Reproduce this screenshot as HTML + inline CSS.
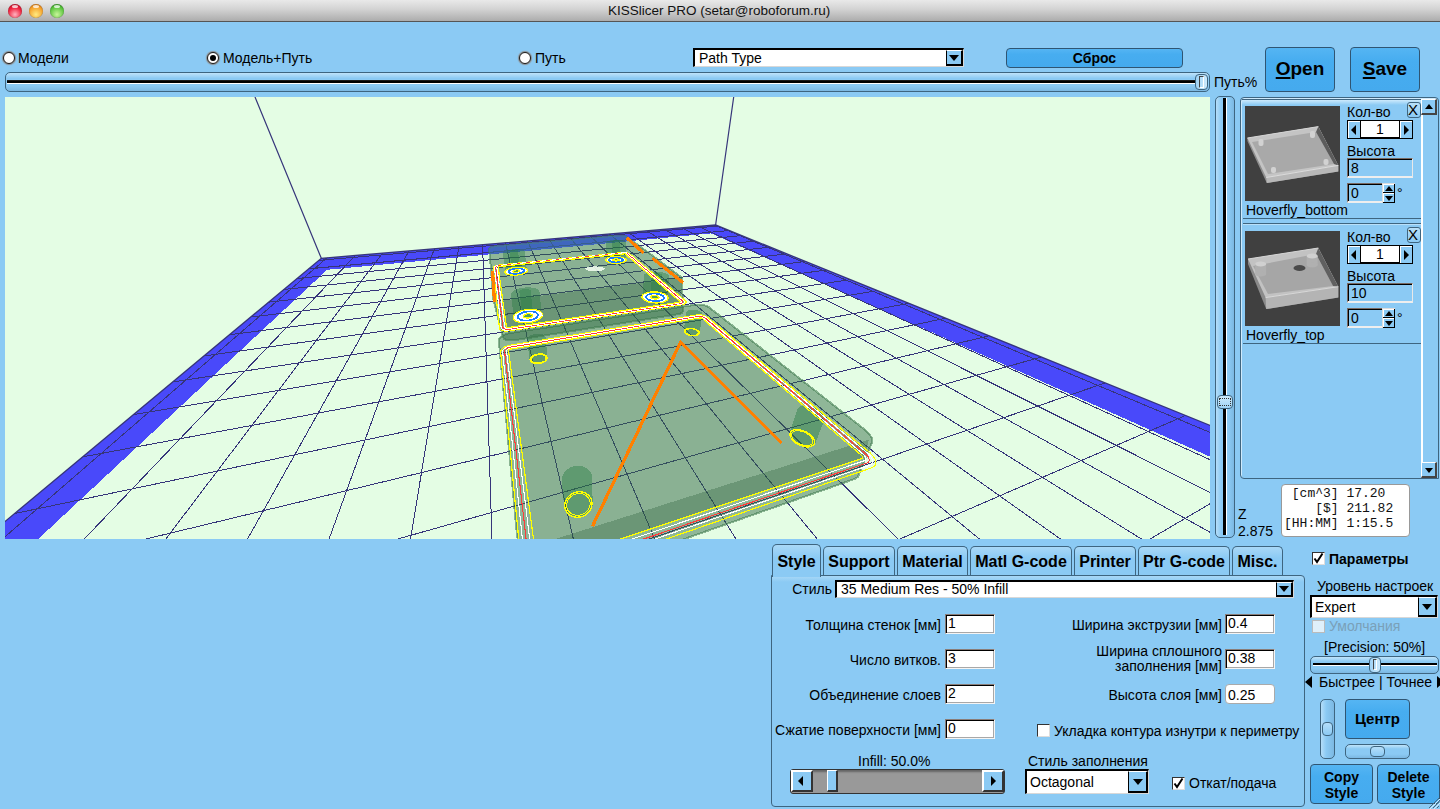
<!DOCTYPE html>
<html><head><meta charset="utf-8">
<style>
*{box-sizing:border-box;margin:0;padding:0}
html,body{width:1440px;height:809px;overflow:hidden}
body{background:#8bcaf4;font-family:"Liberation Sans",sans-serif;color:#000;position:relative;font-size:14px}
.a{position:absolute}
.t{position:absolute;white-space:nowrap;line-height:1}
#title{left:0;top:0;width:1440px;height:22px;background:linear-gradient(#e9e9e9,#d2d2d2 45%,#acacac);border-bottom:1px solid #555}
.tl{position:absolute;top:4px;width:14px;height:14px;border-radius:50%;box-shadow:inset 0 0 1px rgba(0,0,0,.5)}
.btn{position:absolute;background:linear-gradient(#55b5f3,#47adf0 30%,#45aaee);border:1px solid #2f5573;border-radius:4px;font-weight:bold;text-align:center}
.inp{position:absolute;background:#fff;border-top:1px solid #8a7d78;border-left:1px solid #8a7d78;border-right:1px solid #f4f4f4;border-bottom:1px solid #f4f4f4;box-shadow:inset 1px 1px 0 #000,inset -1px -1px 0 #a8a8a8}
.sel{position:absolute;background:#fff;border-top:2px solid #000;border-left:2px solid #000;border-right:1px solid #d8d8d8;border-bottom:1px solid #d8d8d8}
.dd{position:absolute;top:0;bottom:0;right:0;background:#8bcaf4;border-left:1px solid #000;border-bottom:2px solid #000;border-right:2px solid #000;border-top:1px solid #fff}
.dd:after{content:"";position:absolute;left:50%;top:50%;margin-left:-5px;margin-top:-3px;border-left:5px solid transparent;border-right:5px solid transparent;border-top:6px solid #000}
.slider{position:absolute;border:1px solid #3e6580;border-radius:5px;background:linear-gradient(#bfe3fa,#8bcaf4 30%,#8bcaf4 70%,#7cb8e2)}
.cb{position:absolute;width:13px;height:13px;background:#fff;border-top:1px solid #333;border-left:1px solid #333;border-right:1px solid #ddd;border-bottom:1px solid #ddd}
.tab{position:absolute;top:546px;height:29px;border:1px solid #3e6580;border-bottom:none;border-radius:5px 5px 0 0;background:linear-gradient(#a9d8f7,#8bcaf4 40%);font-weight:bold;font-size:16px;text-align:center;line-height:29px}
.lbl{position:absolute;white-space:nowrap;line-height:1;font-size:14px}
.r{text-align:right}
</style></head><body>
<div id="title" class="a">
  <div class="tl" style="left:8px;background:radial-gradient(circle at 50% 75%,#ffb3c0,#f0243f 55%,#a8081d)"></div>
  <div class="tl" style="left:29px;background:radial-gradient(circle at 50% 75%,#ffea80,#f5a12a 60%,#b85a08)"></div>
  <div class="tl" style="left:50px;background:radial-gradient(circle at 50% 75%,#c8f59a,#5cc63f 60%,#1f7a14)"></div>
  <div class="a" style="left:12px;top:5px;width:6px;height:3px;border-radius:50%;background:rgba(255,255,255,.75)"></div>
  <div class="a" style="left:33px;top:5px;width:6px;height:3px;border-radius:50%;background:rgba(255,255,255,.75)"></div>
  <div class="a" style="left:54px;top:5px;width:6px;height:3px;border-radius:50%;background:rgba(255,255,255,.75)"></div>
  <div class="t" style="left:608px;top:4px;font-size:13.5px;color:#111">KISSlicer PRO (setar@roboforum.ru)</div>
</div>
<svg class="a" style="left:5px;top:97px" width="1205" height="442" viewBox="5 97 1205 442" shape-rendering="crispEdges">
<rect x="5" y="97" width="1205" height="442" fill="#e4fde4"/>
<defs><clipPath id="fl"><polygon points="321.3,258.3 715.6,225.0 1400.0,502.4 1400.0,900.0 -200.0,900.0 -200.0,692.1"/></clipPath><clipPath id="bandclip"><path clip-rule="evenodd" d="M321.3,258.3 715.6,225.0 1400.0,502.4 1400.0,900.0 -200.0,900.0 -200.0,692.1Z M327.1,269.8 711.2,233.4 1400.0,541.8 1400.0,900.0 -349.0,900.0Z"/></clipPath></defs>
<path fill="#4949fa" fill-rule="evenodd" d="M321.3,258.3 715.6,225.0 1400.0,502.4 1400.0,900.0 -200.0,900.0 -200.0,692.1Z M327.1,269.8 711.2,233.4 1400.0,541.8 1400.0,900.0 -349.0,900.0Z"/>
<path clip-path="url(#fl)" d="M329.9,255.3L-1937.5,2219.7 M357.7,253.0L-1715.6,2421.3 M384.4,250.7L-1428.1,2641.2 M410.3,248.6L-1056.5,2865.6 M435.2,246.5L-588.0,3066.6 M459.2,244.5L-30.1,3204.3 M482.5,242.6L578.4,3241.0 M505.0,240.7L1175.2,3164.9 M526.8,238.9L1703.1,2998.6 M547.8,237.1L2134.4,2783.2 M568.3,235.4L2470.3,2555.3 M588.0,233.8L2726.6,2337.7 M607.2,232.2L2922.0,2140.5 M625.8,230.6L3072.5,1966.7 M643.9,229.1L3190.3,1815.2 M661.4,227.7L3284.4,1683.7 M678.4,226.2L3361.0,1569.3 M695.0,224.9L3424.6,1469.5 M711.0,223.5L3478.3,1382.0 M263.5,265.1L748.6,223.4 M249.4,274.2L760.7,227.7 M233.3,284.6L773.8,232.5 M214.8,296.5L788.3,237.7 M193.2,310.4L804.2,243.4 M167.8,326.8L821.9,249.7 M137.5,346.4L841.6,256.8 M100.6,370.2L863.7,264.8 M54.8,399.7L888.7,273.8 M-3.8,437.5L917.1,284.0 M-81.0,487.3L949.8,295.7 M-187.7,556.0L987.7,309.4 M-344.5,657.2L1032.3,325.4 M-598.1,820.7L1085.4,344.5 M-1077.1,1129.6L1149.8,367.7 M-2324.1,1933.7L1229.6,396.4 M-13636.7,9228.4L1330.8,432.8" stroke="#36357a" stroke-width="1" fill="none" shape-rendering="crispEdges"/>
<polyline points="-200.0,692.1 321.3,258.3 715.6,225.0 1400.0,502.4" stroke="#36357a" stroke-width="1.3" fill="none" shape-rendering="auto"/>
<path d="M255,97L321.3,258.3M733.7,97L715.6,225" stroke="#36357a" stroke-width="1.2" fill="none" shape-rendering="auto"/>
<polygon points="498.8,340.5 499.2,338.6 500.8,336.8 503.2,335.1 506.3,333.9 509.9,333.1 695.7,304.7 698.5,304.5 701.6,304.7 704.6,305.3 707.3,306.3 709.3,307.5 865.1,429.9 869.2,433.8 871.7,437.8 872.4,441.4 859.2,473.8 857.8,476.9 854.6,479.0 552.3,585.5 545.5,586.7 539.0,585.5 533.6,582.0 529.8,576.8 518.9,542.9 517.1,536.5" fill="#2f6842" fill-opacity="0.47" stroke="#3f7a4e" stroke-width="2" stroke-opacity="0.55" stroke-linejoin="round"/>
<polygon points="699.7,318.0 700.3,318.0 700.9,318.0 701.5,318.1 702.0,318.3 702.4,318.6 861.2,455.1 862.0,456.0 862.4,456.8 862.6,457.6 862.3,458.2 861.7,458.5 541.6,565.5 540.2,565.8 538.9,565.5 537.8,564.8 537.0,563.8 536.6,562.5 508.5,350.7 508.6,350.3 508.9,349.9 509.3,349.6 509.9,349.3 510.6,349.1" fill="#5a645a" fill-opacity="0.07"/>
<polygon points="533.7,545.9 868.8,439.6 864.2,457.7 537.2,567.0" fill="#285a37" fill-opacity="0.31"/>
<polygon points="561.7,480.3 561.8,478.0 562.5,475.7 563.5,473.6 565.0,471.6 566.7,469.8 568.8,468.4 571.1,467.2 573.5,466.3 576.0,465.9 578.6,465.8 581.1,466.0 583.5,466.6 585.7,467.6 587.6,468.9 589.3,470.5 590.6,472.4 591.5,474.4 592.0,476.6 592.7,502.3 592.7,504.6 592.3,506.9 591.5,509.2 590.2,511.4 588.6,513.3 586.6,515.0 584.3,516.3 581.9,517.3 579.3,517.9 576.7,518.0 574.2,517.7 571.8,517.0 569.6,515.8 567.7,514.3 566.2,512.5 565.0,510.5 564.3,508.3 564.0,506.0" fill="#237a40" fill-opacity="0.42"/>
<polygon points="789.2,434.6 789.3,433.2 797.3,409.5 797.8,408.3 798.7,407.3 799.9,406.6 801.4,406.0 803.2,405.7 805.3,405.6 807.5,405.8 809.8,406.2 812.1,406.9 814.4,407.7 816.6,408.8 818.7,410.1 820.6,411.4 822.1,412.9 823.4,414.4 824.2,416.0 824.7,417.5 824.8,418.9 824.4,420.1 814.9,444.2 814.1,445.4 812.9,446.3 811.4,446.9 809.5,447.3 807.5,447.4 805.2,447.2 802.9,446.7 800.6,445.9 798.3,444.9 796.1,443.7 794.2,442.3 792.5,440.8 791.1,439.2 790.1,437.7 789.5,436.1" fill="#237a40" fill-opacity="0.42"/>
<polygon points="527.1,339.1 527.3,338.2 527.8,337.4 528.6,336.6 529.6,335.9 530.8,335.2 532.1,334.7 533.6,334.3 535.1,333.9 536.7,333.8 538.3,333.7 539.8,333.8 541.2,334.1 542.5,334.4 543.6,334.9 544.5,335.5 545.1,336.2 545.5,336.9 545.6,337.8 547.5,357.9 547.4,358.8 546.9,359.7 546.2,360.6 545.3,361.4 544.2,362.1 542.9,362.7 541.4,363.2 539.9,363.6 538.3,363.8 536.7,363.8 535.2,363.7 533.7,363.4 532.5,363.0 531.4,362.5 530.6,361.8 530.0,361.0 529.7,360.2 527.1,339.9" fill="#237a40" fill-opacity="0.42"/>
<polygon points="683.8,331.2 686.0,312.6 686.2,312.0 686.6,311.4 687.2,310.9 688.0,310.5 689.0,310.2 690.2,309.9 691.5,309.8 692.8,309.8 694.2,309.9 695.6,310.0 697.0,310.3 698.3,310.7 699.4,311.2 700.4,311.7 701.3,312.3 701.9,312.9 702.3,313.6 702.4,314.2 699.7,332.8 699.6,333.5 699.2,334.1 698.7,334.7 697.9,335.2 696.9,335.6 695.7,335.9 694.4,336.0 693.1,336.1 691.6,336.0 690.2,335.8 688.9,335.4 687.6,335.0 686.5,334.5 685.5,333.9 684.8,333.2 684.2,332.6 683.9,331.9" fill="#237a40" fill-opacity="0.42"/>
<polygon points="489.2,248.9 489.5,248.2 490.6,247.5 492.2,246.9 494.2,246.4 496.5,246.2 618.6,235.6 620.6,235.5 622.6,235.6 624.5,235.8 626.0,236.2 627.0,236.7 681.2,277.1 682.1,278.1 682.2,279.2 682.9,311.6 682.1,312.8 680.5,313.6 678.3,314.2 513.9,340.3 510.7,340.5 507.7,340.3 505.3,339.5 503.6,338.4 503.0,336.9 493.6,300.9" fill="#2f6842" fill-opacity="0.47" stroke="#3f7a4e" stroke-width="2" stroke-opacity="0.55" stroke-linejoin="round"/>
<polygon clip-path="url(#bandclip)" points="489.2,248.9 489.5,248.2 490.6,247.5 492.2,246.9 494.2,246.4 496.5,246.2 618.6,235.6 620.6,235.5 622.6,235.6 624.5,235.8 626.0,236.2 627.0,236.7 681.2,277.1 682.1,278.1 682.2,279.2 682.9,311.6 682.1,312.8 680.5,313.6 678.3,314.2 513.9,340.3 510.7,340.5 507.7,340.3 505.3,339.5 503.6,338.4 503.0,336.9 493.6,300.9" fill="#4a8aff" fill-opacity="0.3"/>
<polygon points="623.9,253.9 624.3,253.8 624.7,253.9 625.1,253.9 625.3,254.0 625.5,254.1 679.7,301.3 679.9,301.5 679.9,301.8 679.8,302.0 679.4,302.2 679.0,302.3 508.6,327.5 508.0,327.6 507.4,327.5 506.9,327.4 506.6,327.2 506.4,326.9 498.2,267.2 498.2,267.0 498.4,266.9 498.7,266.7 499.1,266.6 499.6,266.5" fill="#5a645a" fill-opacity="0.07"/>
<polygon points="502.4,300.7 681.7,277.8 680.6,302.0 506.5,327.9" fill="#285a37" fill-opacity="0.3"/>
<polygon points="502.9,253.6 503.0,253.0 503.4,252.4 504.1,251.8 505.1,251.3 506.4,250.8 507.9,250.3 509.5,250.0 511.3,249.7 513.1,249.4 515.0,249.3 516.8,249.3 518.6,249.4 520.2,249.5 521.6,249.8 522.8,250.1 523.8,250.5 524.5,251.0 524.8,251.5 526.9,269.9 527.0,270.5 526.7,271.2 526.1,271.8 525.2,272.5 524.0,273.1 522.6,273.6 521.0,274.1 519.2,274.4 517.3,274.7 515.4,274.8 513.5,274.9 511.7,274.8 510.1,274.6 508.6,274.3 507.4,273.9 506.5,273.4 505.9,272.8 505.6,272.2" fill="#237a40" fill-opacity="0.38"/>
<polygon points="509.5,251.5 509.5,251.3 509.7,251.1 509.9,250.8 510.3,250.6 510.8,250.4 511.4,250.2 512.0,250.1 512.7,250.0 513.5,249.9 514.2,249.8 514.9,249.8 515.6,249.9 516.2,249.9 516.8,250.0 517.3,250.2 517.7,250.3 517.9,250.5 518.0,250.7 520.5,270.6 520.5,270.9 520.4,271.1 520.1,271.4 519.8,271.6 519.3,271.8 518.7,272.0 518.1,272.2 517.4,272.3 516.7,272.4 516.0,272.5 515.3,272.5 514.6,272.5 513.9,272.4 513.4,272.3 512.9,272.1 512.5,271.9 512.3,271.7 512.2,271.5" fill="#237a40" fill-opacity="0.35"/>
<polygon points="606.3,242.5 606.6,242.0 607.1,241.5 607.9,241.1 608.9,240.7 610.1,240.4 611.5,240.1 613.0,239.9 614.7,239.8 616.3,239.8 618.0,239.9 619.6,240.0 621.1,240.2 622.5,240.5 623.7,240.9 624.6,241.3 625.4,241.7 625.8,242.2 626.0,242.7 625.5,260.0 625.4,260.5 624.9,261.1 624.2,261.6 623.2,262.0 622.0,262.4 620.6,262.7 619.1,262.9 617.4,263.1 615.7,263.1 614.0,263.0 612.4,262.9 610.9,262.6 609.5,262.2 608.3,261.8 607.4,261.3 606.8,260.8 606.4,260.3 606.3,259.7" fill="#237a40" fill-opacity="0.38"/>
<polygon points="612.2,259.8 612.3,241.2 612.4,241.0 612.6,240.8 612.9,240.7 613.3,240.5 613.8,240.4 614.3,240.3 614.9,240.2 615.6,240.2 616.2,240.2 616.9,240.2 617.5,240.2 618.1,240.3 618.7,240.4 619.1,240.6 619.5,240.7 619.8,240.9 619.9,241.1 620.0,241.3 619.6,259.9 619.6,260.1 619.4,260.3 619.1,260.5 618.7,260.7 618.3,260.8 617.7,260.9 617.1,261.0 616.5,261.1 615.8,261.1 615.2,261.1 614.6,261.0 614.0,260.9 613.5,260.8 613.0,260.6 612.6,260.4 612.4,260.2 612.2,260.0" fill="#237a40" fill-opacity="0.35"/>
<polygon points="642.7,297.0 643.9,275.9 643.9,275.1 644.4,274.4 645.2,273.7 646.4,273.1 647.8,272.5 649.5,272.1 651.4,271.8 653.4,271.6 655.5,271.6 657.7,271.7 659.8,271.9 661.9,272.3 663.8,272.7 665.4,273.3 666.9,274.0 668.0,274.7 668.8,275.5 669.2,276.3 669.3,277.1 667.4,298.3 667.0,299.2 666.3,300.1 665.3,300.8 663.9,301.4 662.2,302.0 660.3,302.3 658.2,302.5 656.0,302.6 653.8,302.5 651.6,302.2 649.5,301.8 647.7,301.2 646.0,300.5 644.7,299.7 643.7,298.8 643.0,297.9" fill="#237a40" fill-opacity="0.38"/>
<polygon points="650.2,297.2 650.2,296.8 651.7,274.1 651.9,273.8 652.2,273.5 652.6,273.3 653.2,273.1 653.9,272.9 654.6,272.8 655.4,272.7 656.3,272.7 657.1,272.7 658.0,272.8 658.8,273.0 659.5,273.2 660.2,273.4 660.7,273.6 661.1,273.9 661.5,274.2 661.6,274.6 661.6,274.9 659.8,297.7 659.7,298.0 659.4,298.3 659.0,298.6 658.4,298.9 657.8,299.0 657.0,299.2 656.2,299.3 655.4,299.3 654.5,299.2 653.7,299.1 652.9,299.0 652.2,298.7 651.6,298.5 651.0,298.2 650.6,297.9 650.4,297.5" fill="#237a40" fill-opacity="0.35"/>
<polygon points="510.8,294.8 510.8,293.8 511.3,292.8 512.2,291.8 513.4,290.8 515.0,289.9 517.0,289.2 519.1,288.5 521.4,288.0 523.8,287.6 526.2,287.4 528.6,287.4 530.9,287.5 533.0,287.8 535.0,288.2 536.6,288.8 537.9,289.5 538.9,290.3 539.4,291.2 539.6,292.2 541.8,315.0 541.5,316.1 540.8,317.2 539.7,318.3 538.2,319.3 536.5,320.3 534.4,321.1 532.0,321.7 529.6,322.2 527.1,322.4 524.6,322.5 522.2,322.3 520.1,322.0 518.1,321.4 516.5,320.7 515.3,319.9 514.4,318.9 514.0,317.8" fill="#237a40" fill-opacity="0.38"/>
<polygon points="519.4,291.5 519.6,291.1 519.9,290.7 520.4,290.4 521.0,290.0 521.8,289.7 522.6,289.4 523.5,289.2 524.5,289.1 525.4,289.0 526.4,289.0 527.3,289.0 528.1,289.2 528.9,289.3 529.5,289.6 530.0,289.8 530.4,290.2 530.6,290.5 533.3,315.1 533.4,315.5 533.2,316.0 533.0,316.4 532.5,316.8 531.9,317.2 531.2,317.6 530.4,317.9 529.5,318.1 528.6,318.3 527.6,318.4 526.7,318.4 525.8,318.3 525.0,318.2 524.2,318.0 523.6,317.7 523.1,317.4 522.8,317.0 522.6,316.6 519.4,291.9" fill="#237a40" fill-opacity="0.35"/>
<polygon points="622.4,252.6 624.1,252.5 625.9,252.6 627.4,252.8 628.7,253.2 629.6,253.7 685.0,300.5 685.9,301.6 685.9,302.6 685.2,303.5 683.8,304.3 681.8,304.8 509.1,330.8 506.2,331.1 503.5,330.8 501.4,330.2 499.9,329.2 499.4,327.9 493.2,267.7 493.5,267.0 494.3,266.3 495.7,265.8 497.4,265.3 499.3,265.0" fill="none" stroke="#ffff00" stroke-width="1.2"/>
<polygon points="622.8,252.9 624.2,252.8 625.6,252.9 626.8,253.1 627.9,253.4 628.6,253.8 683.7,300.7 684.4,301.6 684.4,302.4 683.9,303.2 682.7,303.8 681.1,304.1 509.0,330.0 506.7,330.2 504.5,330.0 502.8,329.5 501.6,328.7 501.1,327.7 494.5,267.5 494.6,267.0 495.3,266.5 496.4,266.0 497.8,265.6 499.4,265.4" fill="none" stroke="#ffffff" stroke-width="1.1"/>
<polygon points="623.2,253.2 624.2,253.2 625.3,253.2 626.3,253.4 627.0,253.6 627.6,253.9 682.4,300.9 682.9,301.6 682.9,302.2 682.5,302.8 681.6,303.2 680.4,303.5 508.9,329.2 507.1,329.3 505.5,329.2 504.1,328.8 503.3,328.2 502.9,327.4 495.7,267.4 495.8,267.0 496.4,266.6 497.2,266.2 498.3,265.9 499.5,265.8" fill="none" stroke="#ff3b3b" stroke-width="1.1"/>
<polygon points="623.5,253.5 624.3,253.5 625.0,253.5 625.7,253.6 626.2,253.8 626.6,254.0 681.1,301.1 681.4,301.6 681.4,302.0 681.1,302.4 680.5,302.7 679.7,302.9 508.7,328.4 507.5,328.4 506.4,328.4 505.5,328.1 504.9,327.7 504.7,327.2 496.9,267.3 497.0,267.0 497.4,266.7 498.0,266.5 498.7,266.3 499.5,266.2" fill="none" stroke="#ffffff" stroke-width="1.1"/>
<polygon points="623.9,253.9 624.3,253.8 624.7,253.9 625.1,253.9 625.3,254.0 625.5,254.1 679.7,301.3 679.9,301.5 679.9,301.8 679.8,302.0 679.4,302.2 679.0,302.3 508.6,327.5 508.0,327.6 507.4,327.5 506.9,327.4 506.6,327.2 506.4,326.9 498.2,267.2 498.2,267.0 498.4,266.9 498.7,266.7 499.1,266.6 499.6,266.5" fill="none" stroke="#ffff00" stroke-width="1.2"/>
<polygon points="696.4,315.1 698.8,314.9 701.5,315.1 704.1,315.7 706.3,316.5 708.1,317.7 869.6,452.4 873.1,456.0 875.4,459.7 876.0,463.1 874.9,465.8 872.1,467.6 543.9,581.5 537.5,582.6 531.5,581.5 526.5,578.3 523.1,573.5 521.5,567.5 500.6,352.0 501.0,350.3 502.3,348.6 504.4,347.1 507.1,346.0 510.1,345.2" fill="none" stroke="#ffff00" stroke-width="1.2"/>
<polygon points="697.2,315.8 699.2,315.7 701.3,315.8 703.4,316.3 705.3,317.0 706.7,317.9 867.5,453.1 870.4,456.0 872.1,459.0 872.6,461.7 871.7,463.9 869.4,465.3 543.3,577.4 538.2,578.3 533.4,577.4 529.4,574.9 526.6,571.0 525.3,566.2 502.6,351.7 502.9,350.3 503.9,349.0 505.6,347.8 507.8,346.8 510.2,346.2" fill="none" stroke="#ffffff" stroke-width="1.1"/>
<polygon points="698.0,316.6 699.6,316.4 701.2,316.6 702.8,316.9 704.2,317.4 705.3,318.1 865.4,453.8 867.6,456.0 868.9,458.2 869.2,460.3 868.5,461.9 866.8,463.0 542.7,573.4 538.9,574.0 535.2,573.4 532.2,571.5 530.1,568.6 529.1,565.0 504.6,351.4 504.8,350.3 505.5,349.3 506.8,348.4 508.5,347.6 510.4,347.2" fill="none" stroke="#ff3b3b" stroke-width="1.1"/>
<polygon points="698.9,317.3 699.9,317.2 701.0,317.3 702.1,317.5 703.1,317.9 703.8,318.4 863.3,454.4 864.8,456.0 865.7,457.5 865.9,458.9 865.4,460.0 864.2,460.8 542.1,569.4 539.5,569.9 537.1,569.4 535.0,568.1 533.5,566.2 532.8,563.7 506.5,351.0 506.7,350.3 507.2,349.6 508.1,349.0 509.2,348.5 510.5,348.2" fill="none" stroke="#ffffff" stroke-width="1.1"/>
<polygon points="699.7,318.0 700.3,318.0 700.9,318.0 701.5,318.1 702.0,318.3 702.4,318.6 861.2,455.1 862.0,456.0 862.4,456.8 862.6,457.6 862.3,458.2 861.7,458.5 541.6,565.5 540.2,565.8 538.9,565.5 537.8,564.8 537.0,563.8 536.6,562.5 508.5,350.7 508.6,350.3 508.9,349.9 509.3,349.6 509.9,349.3 510.6,349.1" fill="none" stroke="#ffff00" stroke-width="1.2"/>
<polygon points="527.5,269.9 527.6,270.3 527.4,270.9 527.1,271.4 526.6,271.9 525.9,272.4 525.1,272.9 524.1,273.3 522.9,273.7 521.7,274.1 520.3,274.4 518.8,274.7 517.3,274.9 515.8,275.0 514.3,275.1 512.8,275.1 511.4,275.0 510.1,274.8 508.9,274.6 507.8,274.4 506.9,274.0 506.2,273.6 505.6,273.2 505.2,272.7 505.0,272.3 505.0,271.7 505.2,271.2 505.6,270.7 506.2,270.2 506.9,269.7 507.8,269.3 508.8,268.8 510.0,268.4 511.3,268.1 512.6,267.8 514.0,267.6 515.4,267.4 516.8,267.3 518.3,267.2 519.7,267.2 521.0,267.3 522.3,267.4 523.4,267.6 524.5,267.9 525.4,268.2 526.2,268.5 526.8,268.9 527.2,269.4" fill="#ffffff" stroke="#ffff00" stroke-width="1.3"/>
<polygon points="524.0,270.2 524.0,270.6 523.9,270.9 523.7,271.3 523.4,271.6 522.9,272.0 522.3,272.3 521.6,272.6 520.8,272.9 520.0,273.1 519.0,273.3 518.0,273.5 517.0,273.7 516.0,273.7 515.0,273.8 514.0,273.8 513.0,273.7 512.1,273.6 511.3,273.5 510.6,273.3 509.9,273.1 509.4,272.8 509.0,272.5 508.7,272.2 508.6,271.9 508.6,271.5 508.7,271.2 509.0,270.8 509.4,270.5 509.9,270.1 510.5,269.8 511.2,269.5 512.0,269.3 512.8,269.0 513.8,268.8 514.7,268.6 515.7,268.5 516.7,268.4 517.7,268.4 518.6,268.4 519.6,268.5 520.4,268.6 521.2,268.7 522.0,268.9 522.6,269.1 523.1,269.3 523.5,269.6 523.8,269.9" fill="none" stroke="#1b7dff" stroke-width="1.7"/>
<polygon points="519.9,270.7 519.9,270.8 519.9,271.0 519.7,271.1 519.6,271.3 519.4,271.5 519.1,271.6 518.8,271.8 518.4,271.9 518.0,272.0 517.6,272.1 517.1,272.2 516.7,272.2 516.2,272.3 515.7,272.3 515.3,272.3 514.8,272.3 514.4,272.2 514.0,272.2 513.7,272.1 513.4,272.0 513.2,271.9 513.0,271.7 512.9,271.6 512.8,271.4 512.8,271.3 512.8,271.1 513.0,270.9 513.1,270.8 513.4,270.6 513.6,270.5 514.0,270.3 514.3,270.2 514.7,270.1 515.1,270.0 515.6,269.9 516.0,269.9 516.5,269.8 517.0,269.8 517.4,269.8 517.8,269.8 518.2,269.9 518.6,269.9 519.0,270.0 519.2,270.1 519.5,270.2 519.7,270.4 519.8,270.5" fill="#4f9a62" stroke="#ffff00" stroke-width="1.2"/>
<polygon points="625.4,258.8 625.8,259.3 626.0,259.7 626.0,260.1 625.9,260.6 625.6,261.0 625.1,261.4 624.5,261.8 623.7,262.1 622.7,262.5 621.7,262.7 620.5,262.9 619.3,263.1 618.0,263.2 616.6,263.3 615.3,263.3 613.9,263.2 612.6,263.1 611.4,262.9 610.2,262.7 609.1,262.4 608.2,262.0 607.4,261.7 606.7,261.3 606.3,260.9 605.9,260.4 605.8,260.0 605.8,259.6 606.0,259.1 606.4,258.7 606.9,258.3 607.6,258.0 608.4,257.6 609.4,257.3 610.4,257.1 611.5,256.9 612.7,256.7 614.0,256.6 615.3,256.6 616.5,256.6 617.8,256.7 619.1,256.8 620.3,256.9 621.4,257.2 622.5,257.4 623.4,257.7 624.2,258.1 624.9,258.4" fill="#ffffff" stroke="#ffff00" stroke-width="1.3"/>
<polygon points="622.4,259.2 622.7,259.4 622.8,259.7 622.8,260.0 622.7,260.3 622.5,260.6 622.2,260.9 621.7,261.2 621.2,261.4 620.6,261.6 619.8,261.8 619.0,262.0 618.2,262.1 617.3,262.1 616.4,262.2 615.5,262.2 614.6,262.1 613.7,262.0 612.8,261.9 612.0,261.8 611.3,261.6 610.7,261.3 610.1,261.1 609.7,260.8 609.3,260.6 609.1,260.3 609.0,260.0 609.0,259.7 609.1,259.4 609.4,259.1 609.7,258.8 610.2,258.6 610.8,258.3 611.4,258.1 612.1,258.0 612.9,257.8 613.7,257.7 614.6,257.6 615.5,257.6 616.3,257.6 617.2,257.7 618.1,257.7 618.9,257.8 619.7,258.0 620.4,258.2 621.1,258.4 621.6,258.6 622.1,258.9" fill="none" stroke="#1b7dff" stroke-width="1.7"/>
<polygon points="618.9,259.5 619.0,259.7 619.1,259.8 619.1,259.9 619.1,260.1 619.0,260.2 618.8,260.3 618.6,260.5 618.3,260.6 618.0,260.7 617.7,260.7 617.3,260.8 617.0,260.9 616.6,260.9 616.1,260.9 615.7,260.9 615.3,260.9 614.9,260.9 614.5,260.8 614.1,260.7 613.8,260.6 613.5,260.5 613.3,260.4 613.0,260.3 612.9,260.2 612.8,260.0 612.7,259.9 612.7,259.8 612.8,259.6 612.9,259.5 613.1,259.4 613.3,259.3 613.5,259.1 613.8,259.1 614.1,259.0 614.5,258.9 614.9,258.9 615.3,258.8 615.7,258.8 616.1,258.8 616.5,258.8 616.9,258.9 617.3,258.9 617.7,259.0 618.0,259.1 618.3,259.2 618.6,259.3 618.8,259.4" fill="#4f9a62" stroke="#ffff00" stroke-width="1.2"/>
<polygon points="666.8,295.6 667.4,296.3 667.9,297.0 668.1,297.7 668.1,298.4 667.8,299.1 667.4,299.8 666.7,300.4 665.8,301.0 664.8,301.5 663.5,302.0 662.1,302.3 660.6,302.6 658.9,302.8 657.2,302.9 655.5,302.9 653.7,302.8 652.0,302.6 650.3,302.3 648.7,301.9 647.2,301.4 645.9,300.9 644.8,300.3 643.8,299.6 643.0,298.9 642.5,298.2 642.1,297.5 642.0,296.8 642.1,296.1 642.5,295.4 643.0,294.8 643.7,294.2 644.6,293.6 645.7,293.2 647.0,292.7 648.3,292.4 649.8,292.2 651.3,292.0 653.0,291.9 654.6,291.9 656.3,292.0 657.9,292.2 659.5,292.5 661.0,292.8 662.4,293.3 663.7,293.8 664.9,294.3 665.9,294.9" fill="#ffffff" stroke="#ffff00" stroke-width="1.3"/>
<polygon points="663.1,296.1 663.5,296.6 663.8,297.1 663.9,297.5 663.9,298.0 663.8,298.5 663.4,299.0 663.0,299.4 662.4,299.8 661.6,300.1 660.8,300.4 659.8,300.7 658.8,300.9 657.7,301.0 656.5,301.1 655.3,301.1 654.1,301.0 653.0,300.8 651.8,300.6 650.7,300.4 649.7,300.1 648.8,299.7 648.0,299.3 647.4,298.9 646.8,298.4 646.4,297.9 646.2,297.4 646.1,296.9 646.2,296.4 646.4,296.0 646.8,295.5 647.2,295.1 647.9,294.8 648.6,294.4 649.5,294.1 650.4,293.9 651.4,293.7 652.5,293.6 653.6,293.6 654.7,293.6 655.9,293.6 657.0,293.8 658.1,294.0 659.1,294.2 660.1,294.5 661.0,294.8 661.8,295.2 662.5,295.6" fill="none" stroke="#1b7dff" stroke-width="1.7"/>
<polygon points="658.8,296.7 658.9,296.9 659.1,297.2 659.1,297.4 659.1,297.6 659.0,297.8 658.9,298.0 658.7,298.2 658.4,298.4 658.0,298.6 657.7,298.7 657.2,298.8 656.7,298.9 656.2,299.0 655.7,299.0 655.2,299.0 654.6,298.9 654.1,298.9 653.6,298.8 653.1,298.7 652.6,298.5 652.2,298.4 651.8,298.2 651.5,298.0 651.3,297.8 651.1,297.5 651.0,297.3 650.9,297.1 650.9,296.9 651.0,296.7 651.2,296.4 651.4,296.3 651.7,296.1 652.0,295.9 652.4,295.8 652.9,295.7 653.3,295.6 653.8,295.5 654.4,295.5 654.9,295.5 655.4,295.6 655.9,295.6 656.5,295.7 656.9,295.8 657.4,296.0 657.8,296.1 658.2,296.3 658.5,296.5" fill="#4f9a62" stroke="#ffff00" stroke-width="1.2"/>
<polygon points="542.4,313.8 542.6,314.7 542.5,315.5 542.1,316.4 541.5,317.3 540.7,318.2 539.7,319.0 538.4,319.8 536.9,320.5 535.3,321.2 533.5,321.7 531.7,322.2 529.7,322.5 527.7,322.7 525.7,322.9 523.8,322.8 521.9,322.7 520.2,322.4 518.5,322.1 517.1,321.6 515.9,321.0 514.8,320.3 514.0,319.6 513.5,318.8 513.2,318.0 513.2,317.1 513.4,316.2 513.9,315.3 514.6,314.4 515.5,313.6 516.7,312.8 518.0,312.1 519.4,311.4 521.0,310.9 522.7,310.4 524.5,310.0 526.4,309.6 528.2,309.4 530.1,309.4 531.9,309.4 533.6,309.5 535.3,309.7 536.8,310.0 538.2,310.5 539.5,311.0 540.5,311.6 541.4,312.3 542.0,313.0" fill="#ffffff" stroke="#ffff00" stroke-width="1.3"/>
<polygon points="537.9,314.5 538.0,315.0 537.9,315.6 537.7,316.2 537.2,316.8 536.7,317.4 535.9,318.0 535.1,318.5 534.1,319.0 532.9,319.5 531.7,319.8 530.5,320.1 529.1,320.4 527.8,320.5 526.5,320.6 525.1,320.6 523.9,320.5 522.7,320.3 521.6,320.1 520.6,319.7 519.8,319.4 519.1,318.9 518.5,318.4 518.1,317.9 517.9,317.3 517.9,316.7 518.0,316.1 518.3,315.5 518.8,314.9 519.4,314.3 520.2,313.8 521.1,313.3 522.1,312.8 523.2,312.4 524.4,312.1 525.6,311.8 526.9,311.6 528.1,311.4 529.4,311.4 530.7,311.4 531.9,311.5 533.0,311.6 534.1,311.8 535.1,312.1 535.9,312.5 536.6,312.9 537.2,313.4 537.6,313.9" fill="none" stroke="#1b7dff" stroke-width="1.7"/>
<polygon points="532.6,315.2 532.6,315.5 532.6,315.8 532.4,316.0 532.2,316.3 532.0,316.6 531.6,316.8 531.2,317.1 530.8,317.3 530.2,317.5 529.7,317.7 529.1,317.8 528.5,317.9 527.9,318.0 527.3,318.0 526.7,318.0 526.1,318.0 525.6,317.9 525.1,317.8 524.6,317.6 524.2,317.5 523.9,317.3 523.6,317.0 523.5,316.8 523.4,316.5 523.3,316.2 523.4,316.0 523.5,315.7 523.7,315.4 524.0,315.1 524.4,314.9 524.8,314.7 525.2,314.4 525.7,314.3 526.3,314.1 526.9,314.0 527.5,313.9 528.1,313.8 528.7,313.8 529.2,313.8 529.8,313.8 530.3,313.9 530.8,314.0 531.3,314.1 531.7,314.3 532.0,314.5 532.3,314.7 532.5,315.0" fill="#4f9a62" stroke="#ffff00" stroke-width="1.2"/>
<ellipse cx="595" cy="268.8" rx="10" ry="2.4" fill="#eefcee" fill-opacity="0.9"/>
<polygon points="591.5,500.2 591.9,501.8 592.0,503.5 591.9,505.1 591.6,506.8 591.0,508.4 590.2,510.0 589.2,511.5 588.0,512.8 586.6,514.0 585.1,515.1 583.5,515.9 581.7,516.6 579.9,517.0 578.1,517.2 576.2,517.2 574.4,517.0 572.7,516.5 571.1,515.8 569.6,514.9 568.3,513.8 567.2,512.5 566.2,511.1 565.5,509.6 565.0,508.1 564.8,506.4 564.8,504.8 565.0,503.1 565.4,501.5 566.1,499.9 567.0,498.4 568.0,497.0 569.2,495.8 570.6,494.7 572.1,493.7 573.7,493.0 575.3,492.4 577.0,492.0 578.7,491.8 580.5,491.8 582.2,492.1 583.8,492.5 585.3,493.1 586.7,493.9 588.0,494.9 589.2,496.0 590.2,497.3 590.9,498.7" fill="none" stroke="#ffff00" stroke-width="1.3"/>
<polygon points="589.7,500.8 590.0,502.1 590.1,503.5 590.0,505.0 589.7,506.4 589.2,507.8 588.6,509.2 587.7,510.4 586.7,511.6 585.5,512.6 584.2,513.5 582.7,514.3 581.2,514.8 579.7,515.2 578.1,515.4 576.5,515.3 575.0,515.1 573.5,514.7 572.1,514.1 570.9,513.3 569.7,512.4 568.7,511.3 567.9,510.2 567.3,508.9 566.9,507.5 566.7,506.1 566.7,504.7 566.9,503.2 567.2,501.8 567.8,500.5 568.5,499.2 569.4,498.0 570.5,496.9 571.7,496.0 572.9,495.1 574.3,494.5 575.7,494.0 577.2,493.6 578.7,493.5 580.2,493.5 581.6,493.7 583.1,494.1 584.4,494.6 585.6,495.3 586.7,496.1 587.7,497.1 588.6,498.2 589.2,499.5" fill="none" stroke="#ffff00" stroke-width="1.0"/>
<polygon points="811.0,435.4 812.1,436.4 813.0,437.6 813.7,438.7 814.2,439.8 814.5,440.9 814.6,442.0 814.5,443.0 814.2,443.9 813.7,444.7 812.9,445.4 812.0,446.0 810.9,446.4 809.6,446.7 808.2,446.9 806.7,446.9 805.1,446.7 803.4,446.4 801.8,445.9 800.1,445.3 798.5,444.5 797.0,443.7 795.5,442.8 794.2,441.7 793.0,440.7 792.0,439.6 791.2,438.4 790.6,437.3 790.1,436.2 789.9,435.1 789.9,434.1 790.0,433.2 790.4,432.3 791.0,431.6 791.8,430.9 792.7,430.4 793.8,430.0 795.0,429.7 796.3,429.6 797.8,429.6 799.3,429.8 800.8,430.1 802.4,430.5 804.0,431.0 805.5,431.7 807.0,432.5 808.5,433.4 809.8,434.3" fill="none" stroke="#ffff00" stroke-width="1.3"/>
<polygon points="809.8,435.7 810.7,436.7 811.5,437.6 812.1,438.6 812.5,439.6 812.8,440.5 812.9,441.4 812.8,442.3 812.5,443.1 812.0,443.8 811.4,444.4 810.6,444.9 809.6,445.2 808.5,445.5 807.3,445.6 806.0,445.6 804.6,445.4 803.2,445.2 801.8,444.8 800.4,444.2 799.0,443.6 797.7,442.9 796.4,442.1 795.3,441.2 794.3,440.3 793.4,439.3 792.7,438.4 792.2,437.4 791.8,436.4 791.6,435.5 791.5,434.6 791.7,433.8 792.0,433.1 792.5,432.4 793.2,431.9 794.0,431.4 794.9,431.1 796.0,430.8 797.1,430.7 798.4,430.8 799.7,430.9 801.0,431.1 802.4,431.5 803.7,432.0 805.1,432.6 806.4,433.2 807.6,434.0 808.7,434.8" fill="none" stroke="#ffff00" stroke-width="1.0"/>
<polygon points="546.9,357.2 547.0,357.8 547.0,358.4 546.8,359.0 546.5,359.7 546.0,360.3 545.4,360.9 544.7,361.4 543.9,361.9 543.0,362.4 542.0,362.7 540.9,363.1 539.8,363.3 538.7,363.5 537.5,363.5 536.4,363.5 535.3,363.4 534.3,363.3 533.4,363.0 532.5,362.7 531.8,362.3 531.2,361.8 530.7,361.3 530.3,360.7 530.1,360.1 530.1,359.5 530.2,358.9 530.4,358.3 530.8,357.6 531.3,357.0 531.9,356.5 532.6,355.9 533.4,355.5 534.4,355.0 535.3,354.7 536.4,354.4 537.4,354.2 538.5,354.0 539.6,353.9 540.7,353.9 541.7,354.0 542.7,354.2 543.6,354.4 544.4,354.8 545.2,355.1 545.8,355.6 546.3,356.1 546.7,356.6" fill="none" stroke="#ffff00" stroke-width="1.3"/>
<polygon points="545.8,357.4 545.9,357.9 545.8,358.4 545.7,359.0 545.4,359.5 545.0,360.0 544.5,360.5 543.9,361.0 543.1,361.5 542.3,361.8 541.5,362.2 540.6,362.4 539.6,362.6 538.7,362.8 537.7,362.8 536.7,362.8 535.8,362.8 534.9,362.6 534.1,362.4 533.4,362.1 532.8,361.8 532.2,361.4 531.8,360.9 531.5,360.4 531.3,359.9 531.3,359.4 531.3,358.8 531.5,358.3 531.8,357.8 532.3,357.3 532.8,356.8 533.4,356.3 534.1,355.9 534.9,355.5 535.8,355.2 536.7,355.0 537.6,354.8 538.5,354.6 539.5,354.6 540.4,354.6 541.3,354.7 542.1,354.8 542.9,355.0 543.6,355.3 544.3,355.6 544.8,356.0 545.3,356.4 545.6,356.9" fill="none" stroke="#ffff00" stroke-width="1.0"/>
<polygon points="698.2,330.9 698.7,331.3 699.0,331.8 699.2,332.3 699.3,332.8 699.2,333.3 699.0,333.7 698.7,334.2 698.3,334.6 697.7,334.9 697.1,335.2 696.3,335.5 695.5,335.6 694.6,335.8 693.6,335.8 692.7,335.8 691.7,335.7 690.7,335.6 689.7,335.4 688.7,335.1 687.8,334.8 687.0,334.5 686.3,334.1 685.7,333.6 685.1,333.2 684.7,332.7 684.4,332.2 684.3,331.7 684.2,331.2 684.3,330.7 684.5,330.3 684.9,329.9 685.3,329.5 685.9,329.2 686.5,328.9 687.3,328.7 688.1,328.5 689.0,328.4 689.9,328.3 690.8,328.3 691.8,328.4 692.8,328.5 693.7,328.7 694.6,329.0 695.5,329.3 696.3,329.6 697.0,330.0 697.7,330.4" fill="none" stroke="#ffff00" stroke-width="1.3"/>
<polygon points="697.3,331.0 697.7,331.4 698.0,331.8 698.2,332.3 698.2,332.7 698.2,333.1 698.0,333.5 697.7,333.9 697.4,334.2 696.9,334.5 696.3,334.8 695.7,335.0 695.0,335.1 694.2,335.2 693.4,335.3 692.5,335.3 691.7,335.2 690.8,335.1 690.0,334.9 689.2,334.7 688.4,334.4 687.7,334.1 687.1,333.8 686.5,333.4 686.0,333.0 685.7,332.6 685.4,332.2 685.3,331.7 685.3,331.3 685.3,330.9 685.5,330.5 685.8,330.2 686.2,329.9 686.7,329.6 687.2,329.3 687.9,329.1 688.6,329.0 689.3,328.9 690.1,328.8 690.9,328.8 691.8,328.9 692.6,329.0 693.4,329.2 694.2,329.4 695.0,329.6 695.7,329.9 696.3,330.3 696.9,330.6" fill="none" stroke="#ffff00" stroke-width="1.0"/>
<polyline points="592.4,526.4 680.7,342 781.5,442.9" fill="none" stroke="#ff8000" stroke-width="3.2" stroke-linejoin="miter"/>
<path d="M626.7,237.6L643.5,252.9M652.6,258.3L683.2,282.7M492.5,271.3L494.5,301.8" fill="none" stroke="#ff8000" stroke-width="3.2"/>
</svg>
<!-- top controls -->
<div class="a" style="left:3px;top:52px;width:12px;height:12px;border-radius:50%;background:#fff;border:1.5px solid #1a1a1a;box-shadow:0 0 1px 1px #8a8a8a"></div>
<div class="lbl" style="left:18px;top:51px">Модели</div>
<div class="a" style="left:207px;top:52px;width:12px;height:12px;border-radius:50%;background:#fff;border:1.5px solid #1a1a1a;box-shadow:0 0 1px 1px #8a8a8a"></div>
<div class="a" style="left:210px;top:55px;width:6px;height:6px;border-radius:50%;background:#000"></div>
<div class="lbl" style="left:223px;top:51px">Модель+Путь</div>
<div class="a" style="left:519px;top:52px;width:12px;height:12px;border-radius:50%;background:#fff;border:1.5px solid #1a1a1a;box-shadow:0 0 1px 1px #8a8a8a"></div>
<div class="lbl" style="left:535px;top:51px">Путь</div>
<div class="sel" style="left:693px;top:48px;width:271px;height:19px"><div class="lbl" style="left:4px;top:1px">Path Type</div><div class="dd" style="width:17px"></div></div>
<div class="btn" style="left:1006px;top:48px;width:177px;height:20px;font-size:14px;line-height:18px">Сброс</div>
<!-- path slider -->
<div class="slider" style="left:5px;top:72px;width:1205px;height:20px"></div>
<div class="a" style="left:7px;top:80px;width:1189px;height:4px;background:#000;border-top:1px solid #1a1a1a;border-bottom:1px solid #fff"></div>
<div class="a" style="left:1195px;top:74px;width:13px;height:16px;border:1px solid #3e6580;border-radius:4px;background:linear-gradient(90deg,#9fd3f6,#cdeafc)"></div>
<div class="a" style="left:1199px;top:76px;width:5px;height:12px;border:1px solid #444;border-right-color:#fff;border-bottom-color:#fff"></div>
<div class="lbl" style="left:1214px;top:75px">Путь%</div>
<div class="btn" style="left:1265px;top:47px;width:70px;height:45px;font-size:19px;line-height:41px"><span style="text-decoration:underline;text-underline-offset:2px;text-decoration-thickness:2px">O</span>pen</div>
<div class="btn" style="left:1350px;top:47px;width:70px;height:45px;font-size:19px;line-height:41px"><span style="text-decoration:underline;text-underline-offset:2px;text-decoration-thickness:2px">S</span>ave</div>
<!-- z slider -->
<div class="slider" style="left:1215px;top:96px;width:20px;height:442px;background:linear-gradient(90deg,#b5def9,#8bcaf4 30%,#8bcaf4 70%,#7cb8e2)"></div>
<div class="a" style="left:1223px;top:98px;width:4px;height:437px;background:#000;border-right:1px solid #fff"></div>
<div class="a" style="left:1217px;top:395px;width:16px;height:14px;border:1px solid #3e6580;border-radius:4px;background:linear-gradient(#cdeafc,#9fd3f6)"></div>
<div class="a" style="left:1219px;top:398px;width:12px;height:8px;border:1px dotted #333"></div>
<div class="lbl" style="left:1238px;top:507px">Z</div>
<div class="lbl" style="left:1238px;top:524px">2.875</div>
<!-- model list -->
<div class="a" style="left:1240px;top:97px;width:199px;height:382px;border:1px solid #3e6580;border-radius:4px 4px 0 4px;box-shadow:inset 1px 1px 0 #cfeafc"></div>
<div class="a" style="left:1242px;top:99px;width:180px;height:1px;background:#3e6580"></div>
<div class="a" style="left:1242px;top:100px;width:180px;height:5px;background:linear-gradient(#cdeafc,#8bcaf4)"></div>
<div class="a" style="left:1421px;top:99px;width:16px;height:379px;background:#8bcaf4;border-left:2px solid #fff"></div>
<div class="a" style="left:1421px;top:99px;width:16px;height:16px;border:1px solid #444;border-top-color:#fff;border-left-color:#fff;border-right-width:2px;border-bottom-width:2px;background:#8bcaf4"></div>
<div class="a" style="left:1425px;top:104px;border-left:4px solid transparent;border-right:4px solid transparent;border-bottom:5px solid #000"></div>
<div class="a" style="left:1421px;top:462px;width:16px;height:16px;border:1px solid #444;border-top-color:#fff;border-left-color:#fff;border-right-width:2px;border-bottom-width:2px;background:#8bcaf4"></div>
<div class="a" style="left:1425px;top:468px;border-left:4px solid transparent;border-right:4px solid transparent;border-top:5px solid #000"></div>
<div class="a" style="left:1243px;top:218px;width:178px;height:1px;background:#3e6580"></div>
<div class="a" style="left:1243px;top:223px;width:178px;height:2px;background:#b9e0f9;border-top:1px solid #3e6580"></div>
<div class="a" style="left:1243px;top:343px;width:178px;height:1px;background:#3e6580"></div>
<!--ITEMS-->
<svg class="a" style="left:1245px;top:106px" width="95" height="95" viewBox="0 0 95 95"><rect width="95" height="95" fill="#404040"/>
<polygon points="2.4,32 73.3,20.6 93.3,59.4 93.3,65.4 21.8,77 2.4,35" fill="#8e8e8e"/>
<polygon points="21.2,71.5 93.3,59.4 93.3,65.4 21.8,77" fill="#b8b8b8"/>
<polygon points="2.4,32 73.3,20.6 93.3,59.4 21.2,71.5" fill="#c4c4c4"/>
<polygon points="7,36 71,26 89,58 23,68" fill="#a9a9a9"/>
<polygon points="71,26 73.3,20.6 93.3,59.4 89,58" fill="#5c5c5c"/>
<polyline points="21.2,71.5 93.3,59.4" stroke="#dcdcdc" stroke-width="1" fill="none"/>
<polyline points="2.4,32 73.3,20.6" stroke="#d4d4d4" stroke-width="1" fill="none"/>
<rect x="13.5" y="33" width="5" height="7" rx="2" fill="#d2d2d2"/><rect x="65" y="25" width="5" height="7" rx="2" fill="#d2d2d2"/>
<rect x="78.5" y="53" width="5" height="6" rx="2" fill="#d2d2d2"/><rect x="26" y="61" width="5" height="6" rx="2" fill="#d2d2d2"/></svg>
<div class="lbl" style="left:1347px;top:105px">Кол-во</div>
<div class="a" style="left:1407px;top:102px;width:14px;height:16px;border:1px solid #3e6580;border-radius:3px;background:linear-gradient(#b9e0f9,#8bcaf4)"></div>
<div class="lbl" style="left:1408px;top:102px;font-size:15px">X</div>
<div class="a" style="left:1347px;top:120px;width:66px;height:19px;background:#000"></div>
<div class="a" style="left:1348px;top:121px;width:12px;height:17px;background:#8bcaf4;border-top:1px solid #fff;border-left:1px solid #fff"></div>
<div class="a" style="left:1351px;top:125px;border-top:5px solid transparent;border-bottom:5px solid transparent;border-right:5px solid #000"></div>
<div class="a" style="left:1361px;top:121px;width:38px;height:16px;background:#fff;text-align:center;font-size:14px;line-height:17px">1</div>
<div class="a" style="left:1400px;top:121px;width:12px;height:17px;background:#8bcaf4;border-top:1px solid #fff;border-left:1px solid #fff"></div>
<div class="a" style="left:1404px;top:125px;border-top:5px solid transparent;border-bottom:5px solid transparent;border-left:5px solid #000"></div>
<div class="lbl" style="left:1347px;top:144px">Высота</div>
<div class="a" style="left:1347px;top:158px;width:66px;height:20px;border-top:1px solid #7a6a62;border-left:1px solid #7a6a62;border-right:1px solid #e8e8e8;border-bottom:2px solid #eee;box-shadow:inset 1px 1px 0 #000"></div>
<div class="lbl" style="left:1351px;top:161px">8</div>
<div class="a" style="left:1347px;top:183px;width:36px;height:20px;border-top:1px solid #7a6a62;border-left:1px solid #7a6a62;border-right:1px solid #e8e8e8;border-bottom:2px solid #eee;box-shadow:inset 1px 1px 0 #000"></div>
<div class="lbl" style="left:1351px;top:186px">0</div>
<div class="a" style="left:1382px;top:183px;width:13px;height:20px;background:#000;border-top:1px solid #ddd;border-left:1px solid #ddd"></div>
<div class="a" style="left:1383px;top:184px;width:11px;height:8px;background:#8bcaf4;border-top:1px solid #fff;border-left:1px solid #fff"></div>
<div class="a" style="left:1383px;top:193px;width:11px;height:9px;background:#8bcaf4;border-top:1px solid #fff;border-left:1px solid #fff"></div>
<div class="a" style="left:1385px;top:186px;border-left:4px solid transparent;border-right:4px solid transparent;border-bottom:5px solid #000"></div>
<div class="a" style="left:1385px;top:196px;border-left:4px solid transparent;border-right:4px solid transparent;border-top:5px solid #000"></div>
<div class="lbl" style="left:1397px;top:186px;font-size:14px">°</div>
<div class="lbl" style="left:1246px;top:203px">Hoverfly_bottom</div>
<svg class="a" style="left:1245px;top:231px" width="95" height="95" viewBox="0 0 95 95"><rect width="95" height="95" fill="#404040"/>
<polygon points="3,28 73.3,17 93.3,55.7 93.3,66.6 21.2,78.1 3,33" fill="#8a8a8a"/>
<polygon points="20.6,66.6 93.3,55.7 93.3,66.6 21.2,78.1" fill="#b4b4b4"/>
<polygon points="3,28 73.3,17 93.3,55.7 20.6,66.6" fill="#c2c2c2"/>
<polygon points="8,35 71,23 88,55 23,63" fill="#a6a6a6"/>
<polygon points="71,23 73.3,17 93.3,55.7 88,55" fill="#606060"/>
<polyline points="20.6,66.6 93.3,55.7" stroke="#d8d8d8" stroke-width="1" fill="none"/>
<polyline points="3,28 73.3,17" stroke="#d4d4d4" stroke-width="1" fill="none"/>
<rect x="10.2" y="33" width="11" height="10" fill="#b0b0b0"/><ellipse cx="15.7" cy="43" rx="5.5" ry="2.5" fill="#b0b0b0"/><ellipse cx="15.7" cy="33" rx="5.5" ry="2.5" fill="#d0d0d0"/>
<rect x="61.7" y="25" width="11" height="9" fill="#b0b0b0"/><ellipse cx="67.2" cy="34" rx="5.5" ry="2.5" fill="#b0b0b0"/><ellipse cx="67.2" cy="25" rx="5.5" ry="2.5" fill="#d0d0d0"/>
<ellipse cx="54.5" cy="37" rx="6" ry="3" fill="#4a4a4a"/></svg>
<div class="lbl" style="left:1347px;top:230px">Кол-во</div>
<div class="a" style="left:1407px;top:227px;width:14px;height:16px;border:1px solid #3e6580;border-radius:3px;background:linear-gradient(#b9e0f9,#8bcaf4)"></div>
<div class="lbl" style="left:1408px;top:227px;font-size:15px">X</div>
<div class="a" style="left:1347px;top:245px;width:66px;height:19px;background:#000"></div>
<div class="a" style="left:1348px;top:246px;width:12px;height:17px;background:#8bcaf4;border-top:1px solid #fff;border-left:1px solid #fff"></div>
<div class="a" style="left:1351px;top:250px;border-top:5px solid transparent;border-bottom:5px solid transparent;border-right:5px solid #000"></div>
<div class="a" style="left:1361px;top:246px;width:38px;height:16px;background:#fff;text-align:center;font-size:14px;line-height:17px">1</div>
<div class="a" style="left:1400px;top:246px;width:12px;height:17px;background:#8bcaf4;border-top:1px solid #fff;border-left:1px solid #fff"></div>
<div class="a" style="left:1404px;top:250px;border-top:5px solid transparent;border-bottom:5px solid transparent;border-left:5px solid #000"></div>
<div class="lbl" style="left:1347px;top:269px">Высота</div>
<div class="a" style="left:1347px;top:283px;width:66px;height:20px;border-top:1px solid #7a6a62;border-left:1px solid #7a6a62;border-right:1px solid #e8e8e8;border-bottom:2px solid #eee;box-shadow:inset 1px 1px 0 #000"></div>
<div class="lbl" style="left:1351px;top:286px">10</div>
<div class="a" style="left:1347px;top:308px;width:36px;height:20px;border-top:1px solid #7a6a62;border-left:1px solid #7a6a62;border-right:1px solid #e8e8e8;border-bottom:2px solid #eee;box-shadow:inset 1px 1px 0 #000"></div>
<div class="lbl" style="left:1351px;top:311px">0</div>
<div class="a" style="left:1382px;top:308px;width:13px;height:20px;background:#000;border-top:1px solid #ddd;border-left:1px solid #ddd"></div>
<div class="a" style="left:1383px;top:309px;width:11px;height:8px;background:#8bcaf4;border-top:1px solid #fff;border-left:1px solid #fff"></div>
<div class="a" style="left:1383px;top:318px;width:11px;height:9px;background:#8bcaf4;border-top:1px solid #fff;border-left:1px solid #fff"></div>
<div class="a" style="left:1385px;top:311px;border-left:4px solid transparent;border-right:4px solid transparent;border-bottom:5px solid #000"></div>
<div class="a" style="left:1385px;top:321px;border-left:4px solid transparent;border-right:4px solid transparent;border-top:5px solid #000"></div>
<div class="lbl" style="left:1397px;top:311px;font-size:14px">°</div>
<div class="lbl" style="left:1246px;top:328px">Hoverfly_top</div>
<!--/ITEMS-->
<!-- info box -->
<div class="a" style="left:1281px;top:484px;width:129px;height:53px;background:#fff;border:1px solid #999;border-radius:4px"></div>
<div class="t" style="left:1284px;top:486px;font-family:'Liberation Mono',monospace;font-size:13px;line-height:15px;white-space:pre;color:#111"> [cm^3] 17.20
    [$] 211.82
[HH:MM] 1:15.5</div>
<!-- tabs -->
<div class="a" style="left:771px;top:575px;width:534px;height:232px;border:1px solid #3e6580;border-radius:0 4px 4px 4px;background:linear-gradient(#a9d8f7,#8bcaf4 6px)"></div>
<div class="tab" style="left:823px;width:72px">Support</div>
<div class="tab" style="left:897px;width:71px">Material</div>
<div class="tab" style="left:970px;width:102px">Matl G-code</div>
<div class="tab" style="left:1074px;width:62px">Printer</div>
<div class="tab" style="left:1138px;width:92px">Ptr G-code</div>
<div class="tab" style="left:1232px;width:51px">Misc.</div>
<div class="tab" style="left:772px;top:544px;width:49px;height:33px;border-bottom:none;background:linear-gradient(#a9d8f7,#8bcaf4 40%);line-height:33px;z-index:2">Style</div>
<div class="lbl r" style="left:701px;width:131px;top:582px">Стиль</div>
<div class="sel" style="left:835px;top:580px;width:459px;height:18px"><div class="lbl" style="left:4px;top:0px">35 Medium Res - 50% Infill</div><div class="dd" style="width:17px"></div></div>
<div class="lbl r" style="left:741px;width:200px;top:618px">Толщина стенок [мм]</div>
<div class="lbl r" style="left:741px;width:200px;top:653px">Число витков.</div>
<div class="lbl r" style="left:741px;width:200px;top:688px">Объединение слоев</div>
<div class="lbl r" style="left:741px;width:200px;top:723px">Сжатие поверхности [мм]</div>
<div class="inp" style="left:945px;top:614px;width:50px;height:20px"><div class="lbl" style="left:2px;top:1px">1</div></div>
<div class="inp" style="left:945px;top:649px;width:50px;height:20px"><div class="lbl" style="left:2px;top:1px">3</div></div>
<div class="inp" style="left:945px;top:684px;width:50px;height:20px"><div class="lbl" style="left:2px;top:1px">2</div></div>
<div class="inp" style="left:945px;top:719px;width:50px;height:20px"><div class="lbl" style="left:2px;top:1px">0</div></div>
<div class="lbl r" style="left:1000px;width:222px;top:618px">Ширина экструзии [мм]</div>
<div class="lbl r" style="left:1000px;width:222px;top:644px;line-height:15px">Ширина сплошного<br>заполнения [мм]</div>
<div class="lbl r" style="left:1000px;width:222px;top:688px">Высота слоя [мм]</div>
<div class="inp" style="left:1225px;top:614px;width:50px;height:20px"><div class="lbl" style="left:2px;top:1px">0.4</div></div>
<div class="inp" style="left:1225px;top:649px;width:50px;height:20px"><div class="lbl" style="left:2px;top:1px">0.38</div></div>
<div class="a" style="left:1225px;top:684px;width:50px;height:20px;background:#fff;border:1px solid #aaa;border-radius:4px"><div class="lbl" style="left:2px;top:3px">0.25</div></div>
<div class="cb" style="left:1037px;top:724px"></div>
<div class="lbl" style="left:1054px;top:724px">Укладка контура изнутри к периметру</div>
<div class="lbl" style="left:858px;top:754px">Infill: 50.0%</div>
<div class="a" style="left:790px;top:769px;width:215px;height:25px;background:#999;border:1px solid #333;border-radius:3px;box-shadow:inset 0 2px 2px #666"></div>
<div class="a" style="left:791px;top:770px;width:22px;height:22px;background:#8bcaf4;border-top:2px solid #fff;border-left:2px solid #fff;border-right:2px solid #333;border-bottom:2px solid #333"></div>
<div class="a" style="left:798px;top:776px;border-top:5px solid transparent;border-bottom:5px solid transparent;border-right:5px solid #000"></div>
<div class="a" style="left:982px;top:770px;width:22px;height:22px;background:#8bcaf4;border-top:2px solid #fff;border-left:2px solid #fff;border-right:2px solid #333;border-bottom:2px solid #333"></div>
<div class="a" style="left:991px;top:776px;border-top:5px solid transparent;border-bottom:5px solid transparent;border-left:5px solid #000"></div>
<div class="a" style="left:827px;top:770px;width:11px;height:22px;background:#8bcaf4;border-top:1px solid #fff;border-left:1px solid #fff;border-right:2px solid #333;border-bottom:2px solid #333"></div>
<div class="lbl" style="left:1028px;top:754px">Стиль заполнения</div>
<div class="sel" style="left:1025px;top:769px;width:124px;height:25px"><div class="lbl" style="left:3px;top:4px">Octagonal</div><div class="dd" style="width:20px"></div></div>
<div class="cb" style="left:1172px;top:777px"></div>
<svg class="a" style="left:1172px;top:777px" width="13" height="13" viewBox="0 0 13 13"><path d="M2.5,6.5L5,10L10.5,1.5" stroke="#000" stroke-width="2" fill="none"/></svg>
<div class="lbl" style="left:1189px;top:776px">Откат/подача</div>
<!-- right side controls -->
<div class="cb" style="left:1312px;top:552px"></div>
<svg class="a" style="left:1312px;top:552px" width="13" height="13" viewBox="0 0 13 13"><path d="M2.5,6.5L5,10L10.5,1.5" stroke="#000" stroke-width="2" fill="none"/></svg>
<div class="lbl" style="left:1329px;top:552px;font-weight:bold">Параметры</div>
<div class="lbl" style="left:1317px;top:579px">Уровень настроек</div>
<div class="sel" style="left:1310px;top:595px;width:128px;height:23px"><div class="lbl" style="left:3px;top:3px">Expert</div><div class="dd" style="width:19px"></div></div>
<div class="cb" style="left:1312px;top:620px;border-color:#bbb;background:#8bcaf4"></div>
<div class="a" style="left:1313px;top:621px;width:11px;height:11px;background:#e8f4fc;opacity:.9"></div>
<div class="lbl" style="left:1329px;top:619px;color:#7aa0b8">Умолчания</div>
<div class="lbl" style="left:1324px;top:640px">[Precision: 50%]</div>
<div class="slider" style="left:1310px;top:656px;width:129px;height:18px"></div>
<div class="a" style="left:1313px;top:663px;width:124px;height:3px;background:#000;border-bottom:1px solid #fff"></div>
<div class="a" style="left:1369px;top:657px;width:12px;height:16px;border:1px solid #3e6580;border-radius:4px;background:linear-gradient(90deg,#9fd3f6,#cdeafc)"></div>
<div class="a" style="left:1373px;top:659px;width:4px;height:11px;border:1px solid #444;border-right-color:#fff;border-bottom-color:#fff"></div>
<div class="a" style="left:1305px;top:676px;border-top:6px solid transparent;border-bottom:6px solid transparent;border-right:7px solid #000"></div>
<div class="a" style="left:1437px;top:676px;border-top:6px solid transparent;border-bottom:6px solid transparent;border-left:7px solid #000"></div>
<div class="lbl" style="left:1319px;top:675px">Быстрее | Точнее</div>
<div class="slider" style="left:1320px;top:699px;width:15px;height:60px;background:linear-gradient(90deg,#b5def9,#8bcaf4 40%,#7cb8e2)"></div>
<div class="a" style="left:1322px;top:722px;width:11px;height:14px;border:1px solid #3e6580;border-radius:4px;background:linear-gradient(#b5def9,#8bcaf4)"></div>
<div class="btn" style="left:1345px;top:699px;width:65px;height:40px;font-size:15px;line-height:38px">Центр</div>
<div class="slider" style="left:1345px;top:744px;width:65px;height:15px"></div>
<div class="a" style="left:1370px;top:746px;width:15px;height:11px;border:1px solid #3e6580;border-radius:4px;background:linear-gradient(#b5def9,#8bcaf4)"></div>
<div class="btn" style="left:1310px;top:764px;width:63px;height:40px;font-size:14px;line-height:16px;padding-top:4px">Copy<br>Style</div>
<div class="btn" style="left:1377px;top:764px;width:63px;height:40px;font-size:14px;line-height:16px;padding-top:4px">Delete<br>Style</div>
<svg class="a" style="left:1426px;top:795px" width="14" height="14" viewBox="0 0 14 14"><path d="M13,3L3,13M13,7L7,13M13,11L11,13" stroke="#4a6a80" stroke-width="1" fill="none"/><path d="M14,4L4,14M14,8L8,14" stroke="#d8eefc" stroke-width="1" fill="none"/></svg>

</body></html>
